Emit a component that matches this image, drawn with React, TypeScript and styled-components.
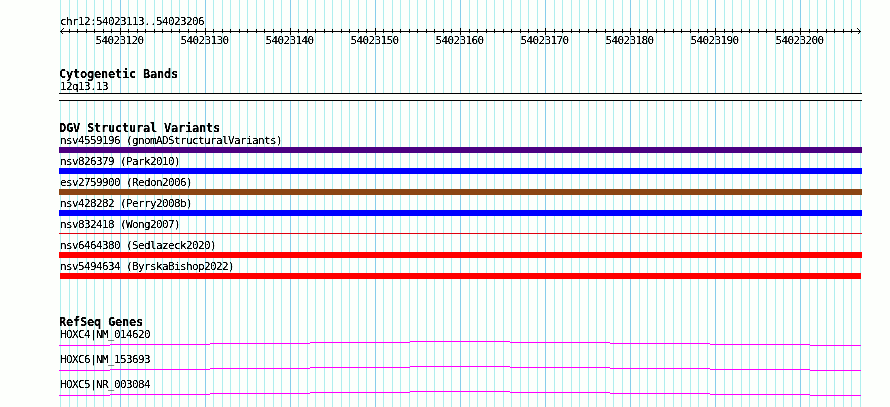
import React from "react";
import styled, { createGlobalStyle } from "styled-components";

const START = 54023113;
const END = 54023207;
const LEFT = 59;
const SCALE = 800 / (END - START);

const positions = Array.from({ length: END - START + 1 }, (_, i) => ({
  value: START + i,
  x: Math.round(60 + i * SCALE),
  major: (START + i) % 10 === 0,
}));

const variants = [
  { name: "nsv4559196 (gnomADStructuralVariants)", color: "#4b0082" },
  { name: "nsv826379 (Park2010)", color: "#0000ff" },
  { name: "esv2759900 (Redon2006)", color: "#8b4513" },
  { name: "nsv428282 (Perry2008b)", color: "#0000ff" },
  { name: "nsv832418 (Wong2007)", color: "#e0000f", thin: true },
  { name: "nsv6464380 (Sedlazeck2020)", color: "#ff0000" },
  { name: "nsv5494634 (ByrskaBishop2022)", color: "#ff0000", inset: true },
];

const genes = ["HOXC4|NM_014620", "HOXC6|NM_153693", "HOXC5|NR_003084"];

// the intron line rises one pixel at each step up to the middle
const steps = [
  { from: 0, to: 51, y: 4 },
  { from: 51, to: 151, y: 3 },
  { from: 151, to: 251, y: 2 },
  { from: 251, to: 351, y: 1 },
  { from: 351, to: 451, y: 0 },
  { from: 451, to: 551, y: 1 },
  { from: 551, to: 651, y: 2 },
  { from: 651, to: 751, y: 3 },
  { from: 751, to: 802, y: 4 },
];

const Ruler = () => (
  <RulerSvg width="803" height="33" viewBox="59 26 803 33">
    <rect x="60" y="31" width="801" height="1" />
    {positions.slice(1, -1).map(({ value, x, major }) => (
      <rect
        key={value}
        x={x}
        y={major ? 28 : 29}
        width="1"
        height={major ? 7 : 4}
      />
    ))}
    <path d="M63.5 28.5L60.5 31.5L63.5 34.5M857.5 28.5L860.5 31.5L857.5 34.5" />
    <g filter="url(#crisp)">
      {positions
        .filter((p) => p.major)
        .map(({ value, x }) => (
          <text key={value} x={x - 24.5} y="44">
            {value}
          </text>
        ))}
    </g>
  </RulerSvg>
);

const App = () => {
  return (
    <>
      <GlobalStyle />
      <Browser>
        <Grid width="890" height="407">
          {/* hard glyph edges, like a bitmap font */}
          <filter id="crisp" colorInterpolationFilters="sRGB">
            <feComponentTransfer>
              <feFuncA type="linear" slope="2.6" intercept="-0.6" />
            </feComponentTransfer>
          </filter>
          {positions.map(({ value, x, major }) => (
            <rect
              key={value}
              x={x}
              y="0"
              width="1"
              height="407"
              fill={major ? "#87ceeb" : "#afeeee"}
            />
          ))}
        </Grid>
        <Content>
          <Region>chr12:54023113..54023206</Region>
          <Ruler />
          <Track $height={54}>
            <Title>Cytogenetic Bands</Title>
            <Label>12q13.13</Label>
            <Band />
          </Track>
          <Track $height={194}>
            <Title>DGV Structural Variants</Title>
            {variants.map(({ name, color, thin, inset }) => (
              <Variant key={name}>
                <Label>{name}</Label>
                <Bar $color={color} $thin={thin} $inset={inset} />
              </Variant>
            ))}
          </Track>
          <Track $height={90}>
            <Title>RefSeq Genes</Title>
            {genes.map((name) => (
              <Gene key={name}>
                <Label>{name}</Label>
                <Intron width="803" height="5">
                  {steps.map(({ from, to, y }) => (
                    <rect key={from} x={from} y={y} width={to - from} height="1" />
                  ))}
                </Intron>
              </Gene>
            ))}
          </Track>
        </Content>
      </Browser>
    </>
  );
};

const GlobalStyle = createGlobalStyle`
  body {
    margin: 0;
    background: #fdfffc;
  }
`;

const Browser = styled.div`
  position: relative;
  box-sizing: border-box;
  width: 890px;
  height: 407px;
  overflow: hidden;
  color: #000;
  font: 11px/12px "DejaVu Sans Mono", monospace;
  letter-spacing: -0.622px;
  white-space: pre;
`;

const Grid = styled.svg`
  position: absolute;
  inset: 0;
  shape-rendering: crispEdges;
`;

const Content = styled.div`
  position: relative;
  width: 803px;
  padding: 16px 0 0 ${LEFT}px;
`;

const Label = styled.div`
  height: 12px;
  padding-left: 1px;
  filter: url(#crisp);
`;

const Region = styled(Label)`
  height: 10px;
`;

const RulerSvg = styled.svg`
  display: block;
  margin-bottom: 9px;
  shape-rendering: crispEdges;
  path {
    fill: none;
    stroke: #000;
  }
`;

const Track = styled.section<{ $height: number }>`
  height: ${({ $height }) => $height}px;
`;

const Title = styled.div`
  height: 13px;
  font-size: 12px;
  font-weight: bold;
  letter-spacing: -0.224px;
  filter: url(#crisp);
`;

const Band = styled.div`
  box-sizing: border-box;
  height: 8px;
  border: solid #000;
  border-width: 1px 0;
  background: #fdfffc;
`;

const Variant = styled.div`
  height: 21px;
`;

const Bar = styled.div<{ $color: string; $thin?: boolean; $inset?: boolean }>`
  height: ${({ $thin }) => ($thin ? 1 : 6)}px;
  margin: ${({ $thin, $inset }) =>
    `${$thin ? 2 : 0}px ${$inset ? 1 : 0}px 0`};
  background: ${({ $color }) => $color};
`;

const Gene = styled.div`
  height: 25px;
`;

const Intron = styled.svg`
  display: block;
  fill: #ff00ff;
  shape-rendering: crispEdges;
`;

export default App;
